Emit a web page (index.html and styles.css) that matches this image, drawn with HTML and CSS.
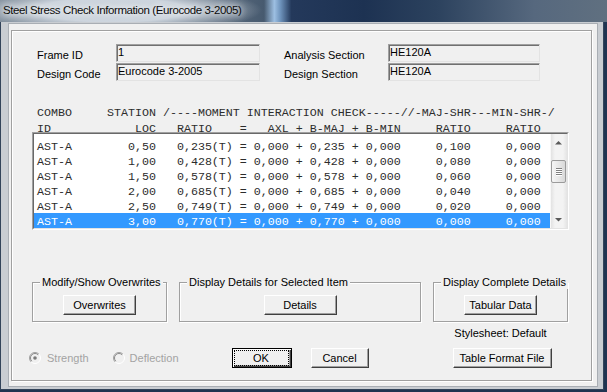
FILE: index.html
```html
<!DOCTYPE html>
<html lang="en">
<head>
    <meta charset="UTF-8">
    <meta name="viewport" content="width=device-width, initial-scale=1.0">
    <title>Steel Stress Check Information (Eurocode 3-2005)</title>
    <link rel="stylesheet" href="styles.css">
</head>
<body>
<div class="window">
    <div class="titlebar">Steel Stress Check Information (Eurocode 3-2005)</div>
    <div class="frame">
        <div class="client">
            <div class="panel">
                <div class="info">
                    <span class="lbl">Frame ID</span><span class="field">1</span>
                    <span class="lbl lbl-2">Analysis Section</span><span class="field">HE120A</span>
                    <span class="lbl">Design Code</span><span class="field">Eurocode 3-2005</span>
                    <span class="lbl lbl-2">Design Section</span><span class="field">HE120A</span>
                </div>

                <div class="heads">COMBO     STATION /----MOMENT INTERACTION CHECK-----//-MAJ-SHR---MIN-SHR-/
ID            LOC   RATIO    =   AXL + B-MAJ + B-MIN     RATIO     RATIO</div>

                <div class="list">
                    <div class="list-in">
                        <div class="rows">
                            <div class="row">AST-A        0,50   0,235(T) = 0,000 + 0,235 + 0,000     0,100     0,000</div>
                            <div class="row">AST-A        1,00   0,428(T) = 0,000 + 0,428 + 0,000     0,080     0,000</div>
                            <div class="row">AST-A        1,50   0,578(T) = 0,000 + 0,578 + 0,000     0,060     0,000</div>
                            <div class="row">AST-A        2,00   0,685(T) = 0,000 + 0,685 + 0,000     0,040     0,000</div>
                            <div class="row">AST-A        2,50   0,749(T) = 0,000 + 0,749 + 0,000     0,020     0,000</div>
                            <div class="row sel">AST-A        3,00   0,770(T) = 0,000 + 0,770 + 0,000     0,000     0,000</div>
                        </div>
                        <div class="sbar">
                            <div class="sb-btn">
                                <svg width="17" height="17" viewBox="0 0 17 17"><path d="M5 10.5 8.5 7 12 10.5Z" fill="#5a5a5a"/></svg>
                            </div>
                            <div class="sb-track">
                                <div class="thumb"><i></i><i></i><i></i><i></i></div>
                            </div>
                            <div class="sb-btn">
                                <svg width="17" height="17" viewBox="0 0 17 17"><path d="M5 7 8.5 10.5 12 7Z" fill="#5a5a5a"/></svg>
                            </div>
                        </div>
                    </div>
                </div>

                <div class="bottom">
                    <fieldset class="group">
                        <legend>Modify/Show Overwrites</legend>
                        <button class="btn">Overwrites</button>
                    </fieldset>
                    <fieldset class="group">
                        <legend>Display Details for Selected Item</legend>
                        <button class="btn">Details</button>
                    </fieldset>
                    <fieldset class="group">
                        <legend>Display Complete Details</legend>
                        <button class="btn">Tabular Data</button>
                    </fieldset>

                    <div class="sheet">Stylesheet: Default</div>

                    <div class="radios">
                        <span class="radio first">
                            <svg width="12" height="12" viewBox="0 0 12 12">
                                <circle cx="6" cy="6" r="5" fill="#f0f0f0"/>
                                <path d="M9.9 2.1A5.5 5.5 0 0 0 2.1 9.9" stroke="#a0a0a0" fill="none"/>
                                <path d="M9.2 2.8A4.5 4.5 0 0 0 2.8 9.2" stroke="#8a8a8a" fill="none"/>
                                <path d="M2.1 9.9A5.5 5.5 0 0 0 9.9 2.1" stroke="#fff" fill="none"/>
                                <circle cx="6" cy="6" r="1.8" fill="#7a7a7a"/>
                            </svg>
                            Strength
                        </span>
                        <span class="radio">
                            <svg width="12" height="12" viewBox="0 0 12 12">
                                <circle cx="6" cy="6" r="5" fill="#f0f0f0"/>
                                <path d="M9.9 2.1A5.5 5.5 0 0 0 2.1 9.9" stroke="#a0a0a0" fill="none"/>
                                <path d="M9.2 2.8A4.5 4.5 0 0 0 2.8 9.2" stroke="#8a8a8a" fill="none"/>
                                <path d="M2.1 9.9A5.5 5.5 0 0 0 9.9 2.1" stroke="#fff" fill="none"/>
                            </svg>
                            Deflection
                        </span>
                    </div>

                    <div class="actions">
                        <button class="btn default"><span class="focus">OK</span></button>
                        <button class="btn cancel">Cancel</button>
                    </div>

                    <div class="format">
                        <button class="btn wide">Table Format File</button>
                    </div>
                </div>
            </div>
        </div>
    </div>
</div>
</body>
</html>
```

FILE: styles.css
```css
* { box-sizing: border-box; }
body { margin: 0; background: #1f3451; font-family: "Liberation Sans", Arial, sans-serif; font-size: 11px; color: #000; }

.window { width: 607px; height: 392px; }
.titlebar {
    height: 22px; padding-left: 3px; line-height: 21px; font-size: 11.5px; letter-spacing: -0.4px; color: #0c0c0c;
    text-shadow: 0 0 6px #fff, 0 0 10px rgba(255,255,255,.8);
    background:
        radial-gradient(ellipse 150px 24px at 112px 10px, rgba(214,221,229,.92) 50%, rgba(214,221,229,0) 100%),
        linear-gradient(90deg, #6b7a89 0%, #56677a 38%, #475a6f 43.5%, #9dbfe2 45.2%, #6e93bc 46.2%, #24395b 48%, #1d3252 60%, #2c425e 72%, #56687e 88%, #607080 100%);
}

.frame { width: 604px; height: 368px; background: #c9cdd2; border: 1px solid #33445a; border-top: 0; padding: 1px 5px 2px 7px; }
.client { height: 100%; background: #f0f0f0; border: 1px solid #a9aeb4; padding: 6px 5px 0 2px; }
.panel { height: 351px; border: 1px solid #a0a0a0; box-shadow: inset 1px 1px 0 #fff, 1px 1px 0 #fff; padding: 13px 0 0 20px; }

/* header fields */
.info { display: grid; grid-template-columns: 79px 144px 128px 152px; grid-template-rows: 18px 18px; row-gap: 1px; margin-left: 5px; }
.lbl { line-height: 18px; padding-top: 2px; white-space: nowrap; }
.lbl-2 { padding-left: 24px; }
.field { line-height: 15px; padding-left: 1px; border: 1px solid; border-color: #a0a0a0 #e3e3e3 #e3e3e3 #a0a0a0; box-shadow: inset 1px 1px 0 #707070; background: #f0f0f0; white-space: nowrap; }

/* results table */
.heads, .row { font-family: "Liberation Mono", "Courier New", monospace; font-size: 11.67px; white-space: pre; color: #2c2c2c; }
.heads { margin-top: 24px; height: 27px; line-height: 16px; padding-left: 5px; }
.list { width: 537px; height: 98px; border: 1px solid; border-color: #a0a0a0 #fff #fff #a0a0a0; }
.list-in { height: 100%; display: flex; border: 1px solid; border-color: #696969 #e3e3e3 #e3e3e3 #696969; background: #fff; }
.rows { flex: 1; padding-top: 4px; }
.row { height: 15px; line-height: 15px; padding: 2px 0 0 3px; overflow: hidden; }
.row.sel { background: #3399ff; color: #fff; }

.sbar { width: 17px; display: flex; flex-direction: column; background: linear-gradient(90deg, #e2e2e2, #f3f3f3 25%, #f3f3f3 75%, #e4e4e4); border-left: 1px solid #f8f8f8; }
.sb-btn { height: 17px; }
.sb-btn svg { display: block; margin-left: -1px; }
.sb-track { flex: 1; padding-top: 9px; }
.thumb { height: 23px; margin: 0 1px 0 0; border: 1px solid #9b9b9b; border-radius: 2px; background: linear-gradient(90deg, #f6f6f6, #e8e8e8 50%, #d9d9d9); display: flex; flex-direction: column; align-items: center; justify-content: center; gap: 1px; }
.thumb i { display: block; width: 6px; height: 1px; background: #808080; box-shadow: 0 1px 0 #fff; }

/* bottom controls */
.bottom { display: grid; grid-template-columns: 135px 242px 135px; column-gap: 12px; margin-top: 46px; }
.group { margin: 0; padding: 6px 0; min-width: 0; border: 1px solid #a0a0a0; box-shadow: inset 1px 1px 0 #fff, 1px 1px 0 #fff; }
.group legend { margin-left: 7px; padding: 0 2px; line-height: 13px; background: #f0f0f0; white-space: nowrap; }

.btn { display: block; margin: 0 auto; width: 73px; height: 20px; padding: 0; font: 11px "Liberation Sans", Arial, sans-serif; color: #000; background: #f0f0f0; border: 1px solid; border-color: #fff #404040 #404040 #fff; box-shadow: inset -1px -1px 0 #a0a0a0; }
.btn.default { width: 60px; padding: 1px; border-color: #000; box-shadow: inset 1px 1px 0 #fff, inset -1px -1px 0 #404040, inset -2px -2px 0 #a0a0a0; }
.btn.cancel { width: 58px; }
.btn.wide { width: 99px; }
.focus { display: block; height: 16px; margin: 0 1px 0 0; line-height: 14px; border: 1px dotted #000; }

.sheet { grid-column: 3; text-align: center; line-height: 13px; margin-top: 5px; padding-bottom: 8px; }
.radios { grid-column: 1; grid-row: 3; display: flex; margin: 0 0 0 -3px; color: #a3a3a3; line-height: 13px; }
.radio { display: flex; align-items: center; gap: 5px; }
.radio.first { gap: 6px; margin-right: 24px; }
.actions { grid-column: 2; grid-row: 3; display: flex; justify-content: center; gap: 19px; }
.actions .btn { margin: 0; }
.format { grid-column: 3; grid-row: 3; padding-left: 3px; }
```
